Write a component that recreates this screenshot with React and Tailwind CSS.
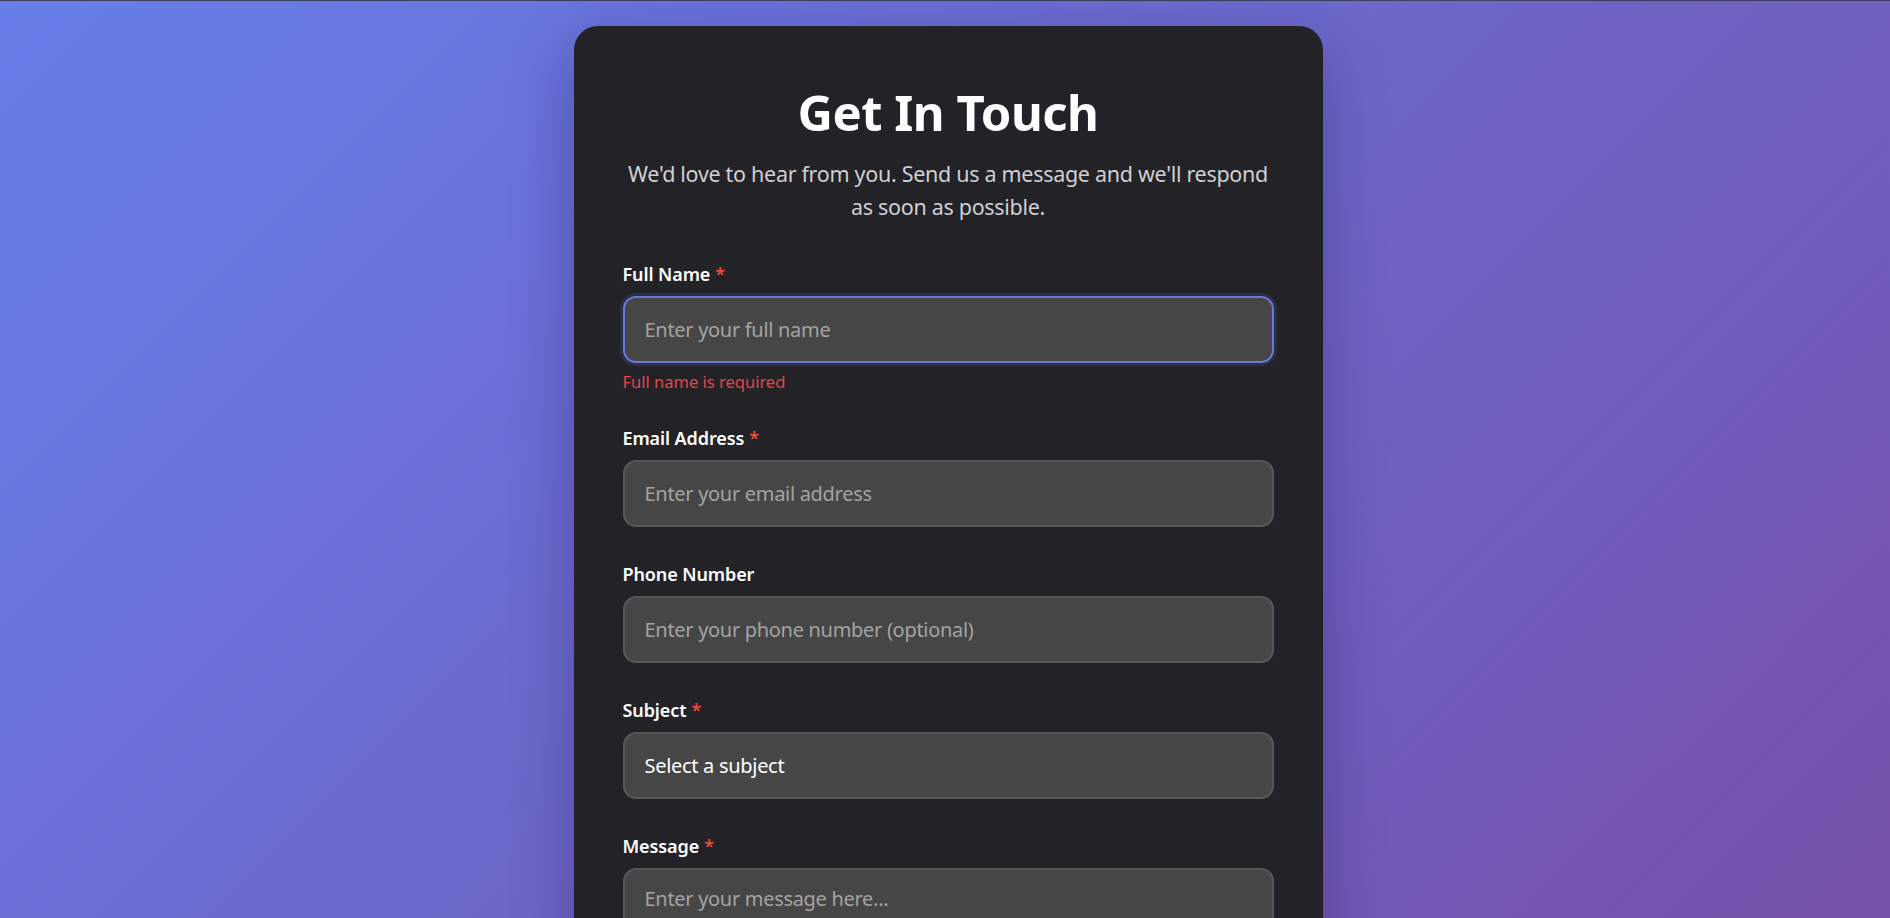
import React, { useState } from "react";

const font = { fontFamily: '"Noto Sans", "Open Sans", sans-serif' };

const Label = ({ children, required }) => (
  <label className="block text-[18px] leading-[22px] font-semibold text-white mb-[11px] tracking-[-0.1px]">
    {children}
    {required && <span className="text-[#e74c3c] ml-[5px]">*</span>}
  </label>
);

const inputBase =
  "w-full h-[67px] rounded-[13px] bg-[#464646] border-2 border-[#585858] px-[20px] text-[20px] tracking-[-0.3px] text-white placeholder:text-[#a3a3a3] outline-none";

export default function App() {
  const [form, setForm] = useState({
    name: "",
    email: "",
    phone: "",
    subject: "",
    message: "",
  });

  const update = (key) => (e) => setForm({ ...form, [key]: e.target.value });

  return (
    <div
      style={font}
      className="min-h-screen w-full bg-[linear-gradient(135deg,#667eea_0%,#764ba2_100%)]"
    >
      <div className="h-px bg-[#3d4160]" />
      <div className="flex justify-center pt-[25px] pb-[25px] pl-[6px]">
        <div className="w-[749px] bg-[#232227] rounded-[24px] shadow-[0_20px_60px_rgba(30,20,80,0.35)] px-[49px] pt-[56px] pb-[50px]">
          <h1 className="text-center text-white font-bold text-[49px] leading-[60px] tracking-[-0.5px]">
            Get In Touch
          </h1>
          <p className="mt-[15px] text-center text-[#cfcfd4] text-[21.5px] leading-[33px] tracking-[-0.3px]">
            We'd love to hear from you. Send us a message and we'll respond as soon as possible.
          </p>

          <form className="mt-[40px]" onSubmit={(e) => e.preventDefault()}>
            <div className="mb-[35px]">
              <Label required>Full Name</Label>
              <input
                type="text"
                autoFocus
                value={form.name}
                onChange={update("name")}
                placeholder="Enter your full name"
                className={`${inputBase} !border-[#6a78da] shadow-[0_0_0_3px_rgba(102,126,234,0.15)] caret-white`}
              />
              <p className="mt-[8px] text-[16.5px] leading-[21px] text-[#e0474a]">
                Full name is required
              </p>
            </div>

            <div className="mb-[36px]">
              <Label required>Email Address</Label>
              <input
                type="email"
                value={form.email}
                onChange={update("email")}
                placeholder="Enter your email address"
                className={inputBase}
              />
            </div>

            <div className="mb-[36px]">
              <Label>Phone Number</Label>
              <input
                type="tel"
                value={form.phone}
                onChange={update("phone")}
                placeholder="Enter your phone number (optional)"
                className={inputBase}
              />
            </div>

            <div className="mb-[36px]">
              <Label required>Subject</Label>
              <select
                value={form.subject}
                onChange={update("subject")}
                className={`${inputBase} appearance-none`}
              >
                <option value="">Select a subject</option>
                <option value="general">General Inquiry</option>
                <option value="support">Support</option>
                <option value="feedback">Feedback</option>
              </select>
            </div>

            <div className="mb-[36px]">
              <Label required>Message</Label>
              <textarea
                rows={5}
                value={form.message}
                onChange={update("message")}
                placeholder="Enter your message here..."
                className="w-full rounded-[13px] bg-[#464646] border-2 border-[#585858] px-[20px] py-[14px] text-[20px] tracking-[-0.3px] text-white placeholder:text-[#a3a3a3] outline-none resize-y"
              />
            </div>

            <button
              type="submit"
              className="w-full h-[67px] rounded-[13px] bg-[linear-gradient(135deg,#667eea_0%,#764ba2_100%)] text-white text-[20px] font-semibold"
            >
              Send Message
            </button>
          </form>
        </div>
      </div>
    </div>
  );
}
